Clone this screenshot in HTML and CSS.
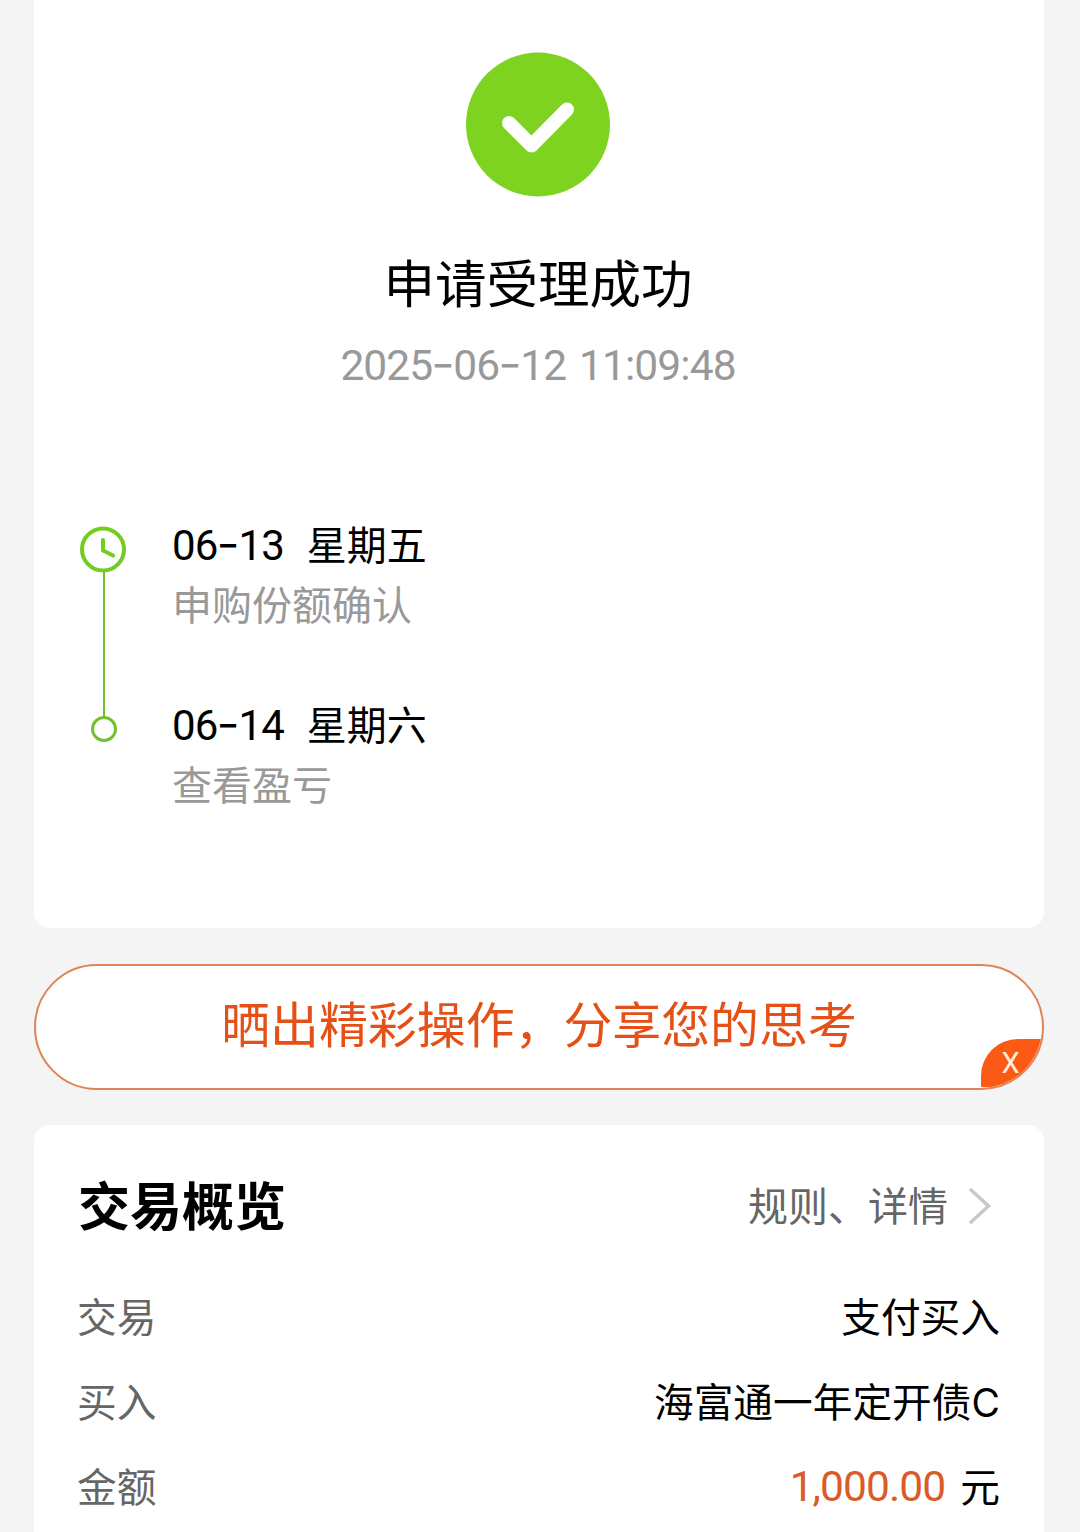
FILE: index.html
```html
<!DOCTYPE html>
<html lang="zh-CN">
<head>
<meta charset="utf-8">
<title>申请受理成功</title>
<link rel="stylesheet" href="styles.css">
</head>
<body>
<main class="page">
  <section class="card result">
    <svg class="result-icon" width="144" height="145" viewBox="0 0 144 145">
      <circle cx="72" cy="72.500" r="72" fill="#7ed321"/>
      <path d="M43 71L65.500 93.500L101 57.500" fill="none" stroke="#fff" stroke-width="14" stroke-linecap="round" stroke-linejoin="round"/>
    </svg>
    <h1 class="result-title">申请受理成功</h1>
    <p class="result-time num">2025<span class="dash">-</span>06<span class="dash">-</span>12 11:09:48</p>
    <ol class="timeline">
      <li class="step">
        <div class="track">
          <svg class="clock" width="46" height="46" viewBox="0 0 46 46" fill="none" stroke="#74cb22" stroke-width="4">
            <circle cx="23" cy="22.500" r="21"/>
            <path d="M23 13V23.500L33 28.500" stroke-linecap="round" stroke-linejoin="round"/>
          </svg>
          <span class="line"></span>
        </div>
        <div class="step-text">
          <p class="step-date"><span class="num">06<span class="dash">-</span>13</span><span class="weekday">星期五</span></p>
          <p class="step-note">申购份额确认</p>
        </div>
      </li>
      <li class="step">
        <div class="track"><span class="dot"></span></div>
        <div class="step-text">
          <p class="step-date"><span class="num">06<span class="dash">-</span>14</span><span class="weekday">星期六</span></p>
          <p class="step-note">查看盈亏</p>
        </div>
      </li>
    </ol>
  </section>

  <section class="share">
    <span class="share-text">晒出精彩操作，分享您的思考</span>
    <span class="share-close">X</span>
  </section>

  <section class="card overview">
    <header class="overview-head">
      <h2 class="overview-title">交易概览</h2>
      <a class="more"><span>规则、详情</span>
        <svg class="chevron" width="24" height="38" viewBox="0 0 24 38" fill="none" stroke="#c8c8c8" stroke-width="3.500"><path d="M2 2L20.500 19L2 36"/></svg>
      </a>
    </header>
    <dl class="rows">
      <div class="row"><dt>交易</dt><dd>支付买入</dd></div>
      <div class="row"><dt>买入</dt><dd>海富通一年定开债<span class="latin">C</span></dd></div>
      <div class="row"><dt>金额</dt><dd class="sum"><span class="amount num">1,000.00</span><span>元</span></dd></div>
    </dl>
  </section>
</main>
</body>
</html>
```
FILE: styles.css
```css
* { box-sizing: border-box; margin: 0; padding: 0; }

body {
  height: 1532px;
  overflow: hidden;
  background: #f4f4f4;
  color: #000;
  font-family: "Noto Sans CJK SC", sans-serif;
  font-size: 40px;
}

.page {
  display: flex;
  flex-direction: column;
  width: 1010px;
  margin-left: 34px;
}

.card { background: #fff; }

.result {
  display: flex;
  flex-direction: column;
  align-items: center;
  height: 928px;
  padding-top: 52px;
  border-radius: 0 0 16px 16px;
}

.result-icon { display: block; margin-right: 2px; }

.result-title {
  margin: 48px 2px 0 0;
  font-size: 51.5px;
  font-weight: 400;
  line-height: 72px;
}

.num {
  font-family: Roboto, "Noto Sans CJK SC", sans-serif;
  font-weight: 400;
  letter-spacing: -0.9px;
}

.dash {
  display: inline-block;
  width: 21px;
  font-family: Inter, sans-serif;
  font-weight: 400;
  text-align: center;
  transform: translateY(-1px) scaleX(1.2);
}

.result-time {
  margin: 18px 2px 0 0;
  color: #999;
  font-size: 42.5px;
  line-height: 60px;
  word-spacing: 3px;
}

.timeline {
  width: 100%;
  margin-top: 119px;
  padding-left: 46px;
  list-style: none;
}

.step { display: flex; height: 180px; }

.track {
  display: flex;
  flex-direction: column;
  align-items: center;
  width: 46px;
  padding-top: 12px;
}

.clock { flex: none; overflow: visible; }

.line {
  flex: none;
  width: 2px;
  height: 146px;
  margin: -1px 0 0 2px;
  background: #74c02f;
}

.dot {
  width: 26px;
  height: 26px;
  margin: 9px 0 0 1px;
  border: 3px solid #74c02f;
  border-radius: 50%;
}

.step-text { margin-left: 46px; }

.step-date { display: flex; gap: 23px; line-height: 60px; }

.step-date .num { font-size: 42px; }

.weekday { line-height: 56px; }

.step-note { margin-top: -3px; color: #999; line-height: 60px; }

.share {
  position: relative;
  height: 126px;
  margin: 36px 0 35px;
  overflow: hidden;
  border: 2px solid #e08355;
  border-radius: 63px;
  background: #fff;
  color: #e45016;
  text-align: center;
}

.share-text { font-size: 48.900px; line-height: 112px; }

.share-close {
  position: absolute;
  right: 0;
  bottom: 1px;
  width: 61px;
  height: 48px;
  padding-right: 2px;
  border-top-left-radius: 37px;
  background: #fa5a14;
  color: #fff0dc;
  font-family: Roboto, sans-serif;
  font-size: 29px;
  font-weight: 400;
  line-height: 48px;
}

.overview {
  height: 460px;
  padding: 46px 44px 0;
  border-radius: 16px;
}

.overview-head {
  display: flex;
  align-items: center;
  justify-content: space-between;
  height: 70px;
  padding-right: 8px;
}

.overview-title { font-size: 52px; font-weight: 700; line-height: 66px; }

.overview-title, .more span { padding-bottom: 4px; }

.more { display: flex; align-items: center; color: #666; line-height: 66px; }

.chevron { margin-left: 20px; }

.rows { margin-top: 31px; font-size: 39.700px; }

.row {
  display: flex;
  justify-content: space-between;
  height: 85px;
  line-height: 85px;
}

.row dt { margin-left: -1px; color: #666; }

.latin { font-family: Inter, sans-serif; font-weight: 400; font-size: 39px; }

.sum { display: flex; gap: 15px; }

.amount { color: #d95b27; font-size: 42.500px; line-height: 89px; }
```
